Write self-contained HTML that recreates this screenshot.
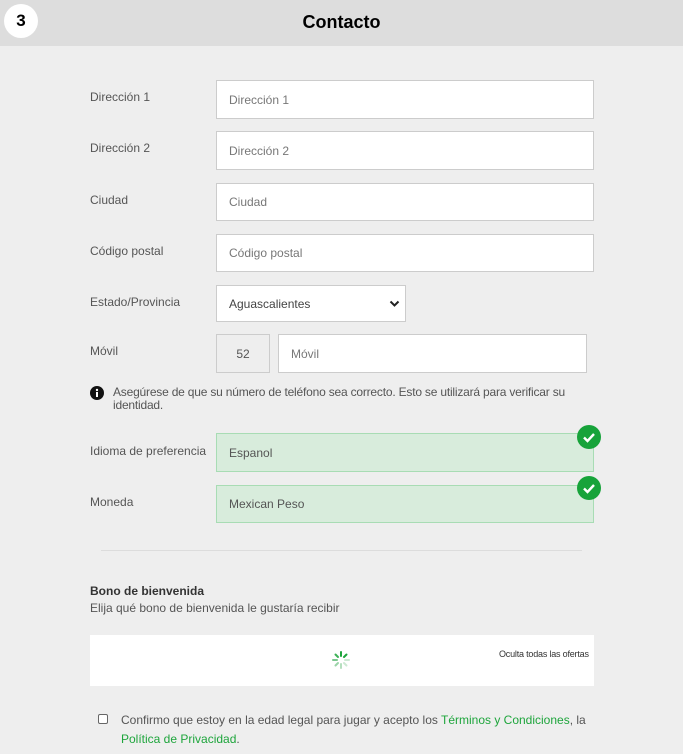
<!DOCTYPE html>
<html><head><meta charset="utf-8"><style>
*{box-sizing:border-box;margin:0;padding:0}
body{width:683px;height:754px;background:#eeeeee;font-family:"Liberation Sans",sans-serif;position:relative;overflow:hidden;color:#555}
.a{position:absolute}
.hdr{left:0;top:0;width:683px;height:46px;background:#dddddd}
.circ{left:4px;top:4px;width:34px;height:34px;border-radius:50%;background:#fff;text-align:center;line-height:34px;font-weight:bold;font-size:17px;color:#000}
.title{left:0;top:12px;width:683px;text-align:center;font-weight:bold;font-size:18px;color:#000}
.lbl{left:90px;font-size:12px;color:#555}
.in{background:#fff;border:1px solid #cccccc;font-size:12px;color:#777;padding-left:12px;display:flex;align-items:center}
.gr{background:#d8ecdc;border:1px solid #a8dcb4;color:#555}
.chk{width:24px;height:24px;border-radius:50%;background:#17a33a}
.lnk{color:#1ea53c}
</style></head><body>
<div class="a hdr"></div>
<div class="a circ">3</div>
<div class="a title">Contacto</div>

<div class="a lbl" style="top:90px">Dirección 1</div>
<div class="a in" style="left:216px;top:80px;width:378px;height:39px">Dirección 1</div>
<div class="a lbl" style="top:141px">Dirección 2</div>
<div class="a in" style="left:216px;top:131px;width:378px;height:39px">Dirección 2</div>
<div class="a lbl" style="top:193px">Ciudad</div>
<div class="a in" style="left:216px;top:183px;width:378px;height:38px">Ciudad</div>
<div class="a lbl" style="top:244px">Código postal</div>
<div class="a in" style="left:216px;top:234px;width:378px;height:38px">Código postal</div>
<div class="a lbl" style="top:295px">Estado/Provincia</div>
<div class="a in" style="left:216px;top:285px;width:190px;height:37px;color:#444">Aguascalientes
<svg class="a" style="left:172px;top:14px" width="11" height="8" viewBox="0 0 11 8"><path d="M1.5 1.5 L5.5 5.5 L9.5 1.5" stroke="#222" stroke-width="2" fill="none"/></svg></div>
<div class="a lbl" style="top:344px">Móvil</div>
<div class="a in" style="left:216px;top:334px;width:54px;height:39px;background:#eeeeee;justify-content:center;padding:0;color:#555">52</div>
<div class="a in" style="left:278px;top:334px;width:309px;height:39px">Móvil</div>

<svg class="a" style="left:90px;top:386px" width="14" height="14" viewBox="0 0 14 14"><circle cx="7" cy="7" r="7" fill="#111"/><rect x="6" y="6" width="2" height="5" fill="#fff"/><circle cx="7" cy="4" r="1.2" fill="#fff"/></svg>
<div class="a" style="left:113px;top:386px;width:480px;font-size:12px;line-height:13px;color:#555;letter-spacing:-0.2px">Asegúrese de que su número de teléfono sea correcto. Esto se utilizará para verificar su identidad.</div>

<div class="a lbl" style="top:444px">Idioma de preferencia</div>
<div class="a in gr" style="left:216px;top:433px;width:378px;height:39px">Espanol</div>
<div class="a chk" style="left:577px;top:425px"><svg width="24" height="24" viewBox="0 0 24 24"><path d="M7 12.5 L10.5 16 L17 9" stroke="#fff" stroke-width="2.4" fill="none"/></svg></div>
<div class="a lbl" style="top:495px">Moneda</div>
<div class="a in gr" style="left:216px;top:485px;width:378px;height:38px">Mexican Peso</div>
<div class="a chk" style="left:577px;top:476px"><svg width="24" height="24" viewBox="0 0 24 24"><path d="M7 12.5 L10.5 16 L17 9" stroke="#fff" stroke-width="2.4" fill="none"/></svg></div>

<div class="a" style="left:101px;top:550px;width:481px;height:1px;background:#dcdcdc"></div>
<div class="a" style="left:90px;top:584px;font-size:12px;font-weight:bold;color:#333">Bono de bienvenida</div>
<div class="a" style="left:90px;top:601px;font-size:12px;color:#555">Elija qué bono de bienvenida le gustaría recibir</div>
<div class="a" style="left:90px;top:635px;width:504px;height:51px;background:#fff"></div>
<svg class="a" style="left:331px;top:650px" width="20" height="20" viewBox="0 0 20 20">
<g stroke-width="2" stroke-linecap="round">
<line x1="10" y1="2" x2="10" y2="6" stroke="#1ea53c"/>
<line x1="15.5" y1="4.5" x2="13" y2="7" stroke="#1ea53c"/>
<line x1="18" y1="10" x2="14" y2="10" stroke="#cde9d3"/>
<line x1="15.5" y1="15.5" x2="13" y2="13" stroke="#cde9d3"/>
<line x1="10" y1="18" x2="10" y2="14" stroke="#b5dfbf"/>
<line x1="4.5" y1="15.5" x2="7" y2="13" stroke="#9ad4a8"/>
<line x1="2" y1="10" x2="6" y2="10" stroke="#7cc78f"/>
<line x1="4.5" y1="4.5" x2="7" y2="7" stroke="#3db257"/>
</g></svg>
<div class="a" style="left:499px;top:649px;font-size:9px;color:#333;letter-spacing:-0.2px">Oculta todas las ofertas</div>

<div class="a" style="left:98px;top:714px;width:10px;height:10px;border:1px solid #666;border-radius:2px;background:#fff"></div>
<div class="a" style="left:121px;top:711px;width:470px;font-size:12px;line-height:19px;color:#555">Confirmo que estoy en la edad legal para jugar y acepto los <span class="lnk">Términos y Condiciones</span>, la <span class="lnk">Política de Privacidad</span>.</div>
</body></html>
